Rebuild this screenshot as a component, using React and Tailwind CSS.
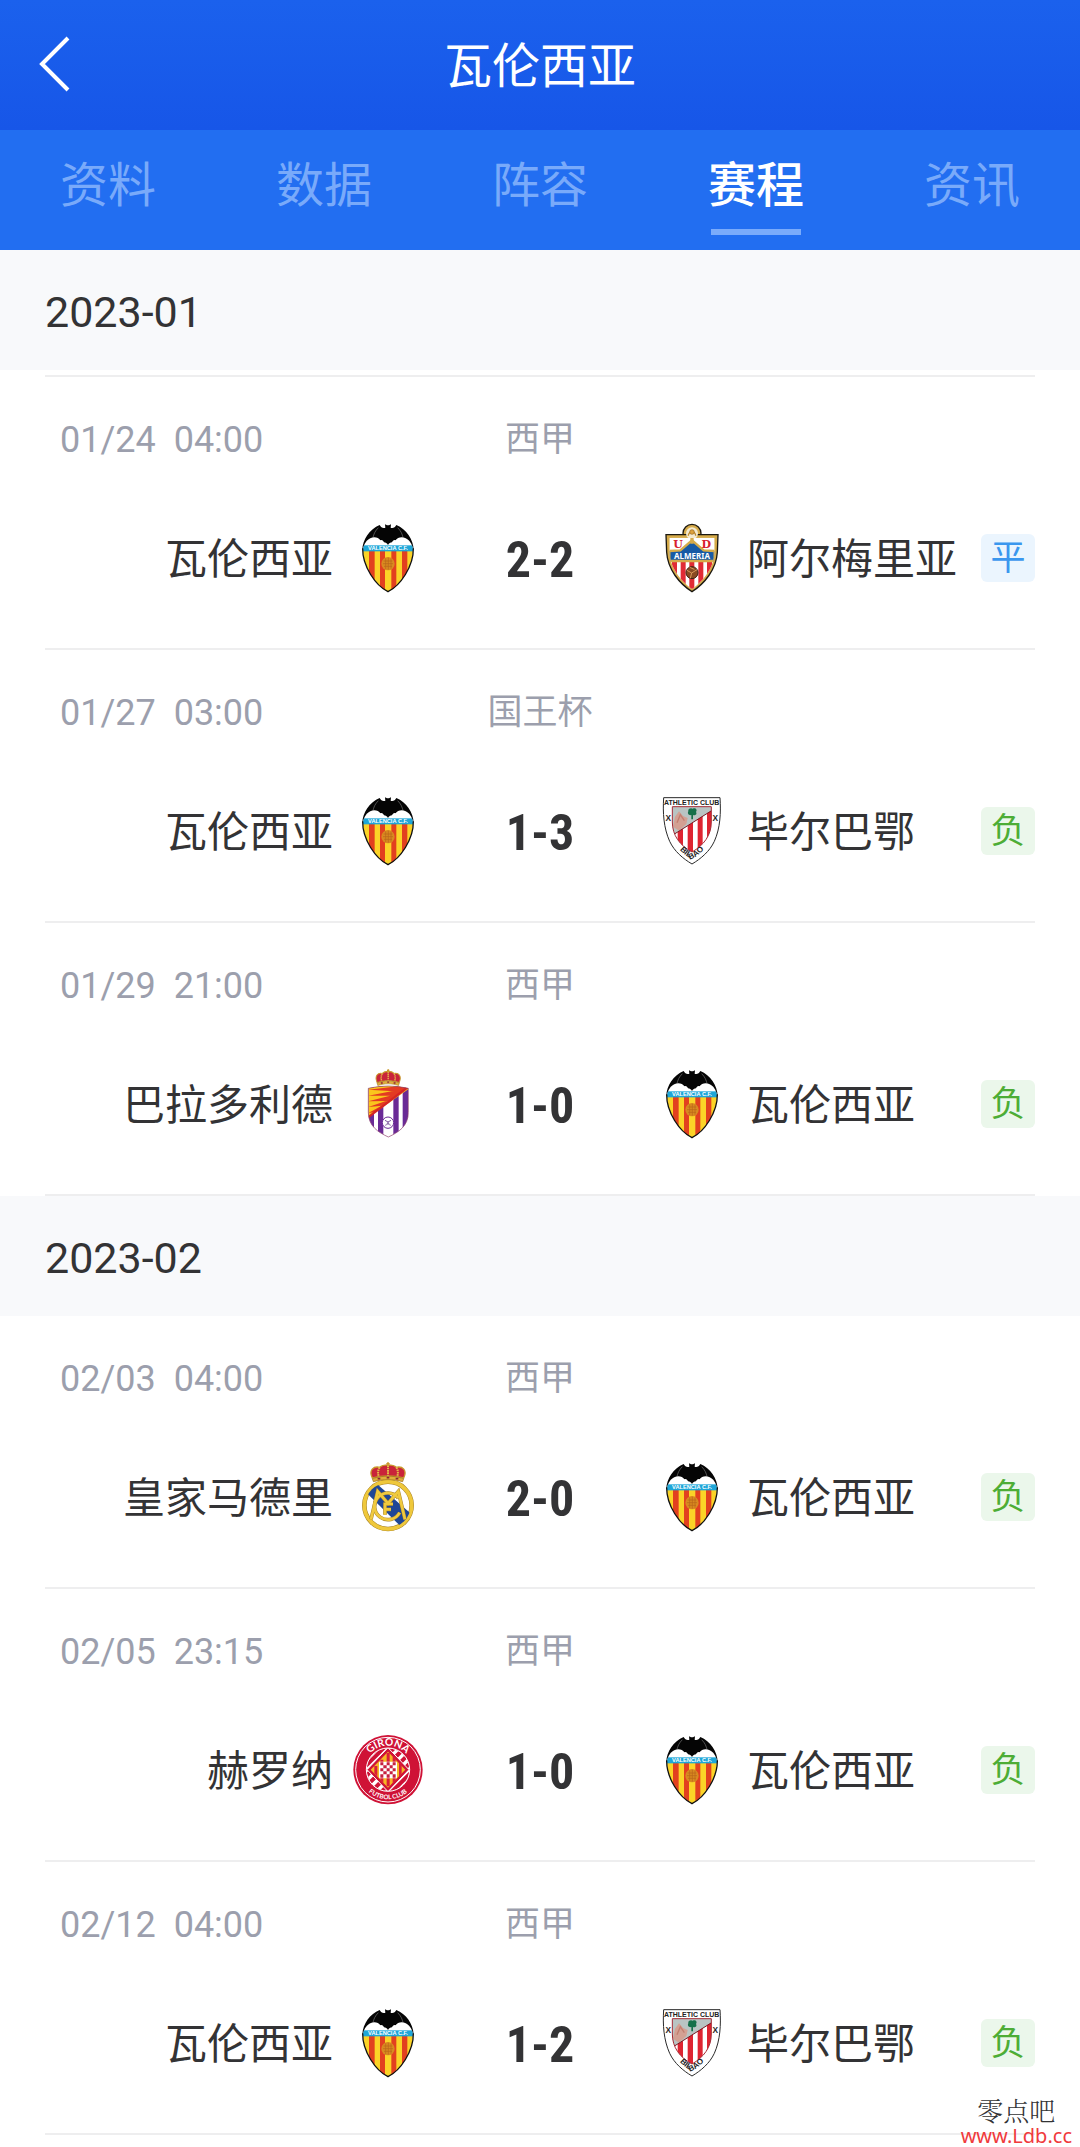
import React, { useId } from "react";

function Crest({ label, children }) {
  return (
    <svg viewBox="0 0 210 210" role="img" aria-label={label} className="size-[70px] shrink-0">
      {children}
    </svg>
  );
}

function Valencia() {
  const id = useId();
  return (
    <Crest label="Valencia C.F.">
      <defs>
        <clipPath id={id}>
          <path d="M30 80C30 130 68 188 105 206C142 188 180 130 180 80C180 55 150 25 105 25C60 25 30 55 30 80Z" />
        </clipPath>
      </defs>
      <g clipPath={`url(#${id})`}>
        <rect width="210" height="210" fill="#fff" />
        <rect y="84" width="210" height="126" fill="#fbd327" />
        <path d="M48 84h17v126h-17zM81 84h15v126h-15zM115 84h15v126h-15zM147 84h16v126h-16z" fill="#e2401f" />
        <rect y="67" width="210" height="18" fill="#1ea6d8" />
      </g>
      <circle cx="105" cy="122" r="20" fill="#d98a20" />
      <path d="M92 114h26M90 122h30M93 130h24M98 106v32M106 104v36M114 107v30" stroke="#b8651a" strokeWidth="2" />
      <path d="M29 76C28 130 68 188 105 206C142 188 182 130 181 76" fill="none" stroke="#111" strokeWidth="4" />
      <path
        d="M28 82C28 50 50 18 80 6C84 14 90 16 97 14L96 4L102 7H108L114 4L113 14C120 16 126 14 130 6C160 18 182 50 182 82C178 66 172 54 162 48C150 40 134 42 128 52C124 50 120 52 117 58C112 58 108 61 105 66C102 61 98 58 93 58C90 52 86 50 82 52C76 42 60 40 48 48C38 54 32 66 28 82Z"
        fill="#050505"
      />
      <path d="M76 14C66 24 62 34 60 44M134 14C144 24 148 34 150 44" fill="none" stroke="#777" strokeWidth="2" />
      <text x="105" y="82" textAnchor="middle" fontSize="17" fontWeight="700" fill="#fff" fontFamily="Liberation Sans, sans-serif">
        VALENCIA C.F.
      </text>
    </Crest>
  );
}

function Almeria() {
  const id = useId();
  return (
    <Crest label="UD Almeria">
      <defs>
        <clipPath id={id}>
          <path d="M37 44H173V84C173 130 140 174 105 198C70 174 37 130 37 84Z" />
        </clipPath>
      </defs>
      <circle cx="105" cy="31" r="27" fill="#d6ab4a" stroke="#1b1811" strokeWidth="4" />
      <path d="M27 35H183L181 88C178 140 142 182 105 206C68 182 32 140 29 88Z" fill="#d6ab4a" stroke="#1b1811" strokeWidth="4" />
      <circle cx="105" cy="31" r="18" fill="#f4ead0" />
      <path d="M94 38a11 11 0 0 1 22 0" fill="none" stroke="#c08a2a" strokeWidth="4" />
      <circle cx="105" cy="27" r="7" fill="#dda23d" stroke="#94651c" strokeWidth="2" />
      <g clipPath={`url(#${id})`}>
        <rect width="210" height="210" fill="#fff" />
        <path d="M45 114h15v90h-15zM71 114h15v90h-15zM97 114h15v90h-15zM124 114h15v90h-15zM150 114h15v90h-15z" fill="#e12b35" />
        <path d="M37 84L70 82L105 52L140 82L173 84V114H37Z" fill="#175aa5" stroke="#d6ab4a" strokeWidth="7" />
        <path d="M105 44V62" stroke="#d6ab4a" strokeWidth="10" />
      </g>
      <g fontFamily="DejaVu Serif, serif" fontWeight="700" fontSize="33" fill="#d8202d" textAnchor="middle">
        <text x="63" y="76">U</text>
        <text x="148" y="76">D</text>
      </g>
      <text x="105" y="107" textAnchor="middle" fontSize="24" fontWeight="700" fill="#fff" fontFamily="Noto Sans, sans-serif">
        ALMERIA
      </text>
      <circle cx="105" cy="149" r="18" fill="#8a4a22" stroke="#3d2212" strokeWidth="3" />
      <path d="M90 142L104 150L100 166M104 150L120 140M98 133L112 139" fill="none" stroke="#d99a5b" strokeWidth="3" />
    </Crest>
  );
}

function Bilbao() {
  const id = useId();
  return (
    <Crest label="Athletic Club Bilbao">
      <defs>
        <clipPath id={id}>
          <path d="M46 32H163V78C163 118 140 148 105 168C68 148 46 118 46 78Z" />
        </clipPath>
        <path id={`${id}a`} d="M44 122C60 156 82 180 105 188C128 178 150 154 164 120" />
      </defs>
      <path d="M20 5H189C192 50 190 96 172 136C158 166 132 188 105 204C78 188 52 166 38 136C20 96 17 50 20 5Z" fill="#fff" stroke="#2a2a2a" strokeWidth="3" />
      <g clipPath={`url(#${id})`}>
        <rect width="210" height="210" fill="#fff" />
        <rect x="40" y="28" width="130" height="90" fill="#b9c4c3" />
        <path d="M48 92L54 62L66 46L78 60L92 66L88 84L66 104Z" fill="#d3a093" />
        <path d="M60 80L70 56L82 74" fill="none" stroke="#c27e70" strokeWidth="4" />
        <path d="M46 118L170 40V210H46Z" fill="#fff" />
        <path d="M62 108L78 98V210H62ZM92 89L108 79V210H92ZM122 70L137 60V210H122ZM150 52L166 42V210H150Z" fill="#de2431" />
        <path d="M46 118L170 40" stroke="#7a1720" strokeWidth="3" />
      </g>
      <path d="M46 32H163V78C163 118 140 148 105 168C68 148 46 118 46 78Z" fill="none" stroke="#a32a35" strokeWidth="3" />
      <path d="M94 46C92 38 102 34 107 38C116 34 122 42 117 48C122 56 112 60 108 57V70H103V57C96 59 90 53 94 46Z" fill="#15704a" />
      <g fontFamily="Liberation Sans, sans-serif" fontWeight="700" fill="#222" textAnchor="middle">
        <text x="104" y="27" fontSize="21">ATHLETIC CLUB</text>
        <text x="34" y="74" fontSize="25">X</text>
        <text x="175" y="74" fontSize="25">X</text>
        <text fontSize="24">
          <textPath href={`#${id}a`} startOffset="50%">BILBAO</textPath>
        </text>
      </g>
    </Crest>
  );
}

function RoyalCrown() {
  return (
    <g>
      <path d="M58 48C46 24 62 12 80 16C90 6 120 6 130 16C148 12 164 24 152 48C120 40 90 40 58 48Z" fill="#c9243a" stroke="#c9992c" strokeWidth="4" />
      <path d="M80 16C74 26 74 36 78 44M130 16C136 26 136 36 132 44M105 10V42" fill="none" stroke="#e4bb48" strokeWidth="6" strokeDasharray="5 2" />
      <path d="M58 50C90 40 120 40 152 50L149 59C120 51 90 51 61 59Z" fill="#e0b03a" stroke="#9b6f1d" strokeWidth="2" />
      <path d="M105 0V12M100 5H110" stroke="#c9992c" strokeWidth="4" />
      <path d="M74 50h8M101 47h8M128 50h8" stroke="#8d2434" strokeWidth="5" />
    </g>
  );
}

function Valladolid() {
  const id = useId();
  const shield = "M46 58Q106 44 166 58V130C166 172 136 190 106 204C76 190 46 172 46 130Z";
  return (
    <Crest label="Real Valladolid">
      <defs>
        <clipPath id={id}>
          <path d={shield} />
        </clipPath>
      </defs>
      <g transform="translate(31 0) scale(.71 .84)">
        <RoyalCrown />
      </g>
      <g clipPath={`url(#${id})`}>
        <rect width="210" height="210" fill="#fff" />
        <path d="M46 50h17v160h-17zM75 50h16v160h-16zM121 50h16v160h-16zM149 50h18v160h-18z" fill="#6a2a96" />
        <path d="M40 44H170V58L44 146Z" fill="#fbc51d" />
        <path d="M46 62L166 48L150 68ZM46 80L150 60L130 80ZM46 97L132 75L108 96ZM46 114L110 92L88 110ZM46 132L90 108L64 130Z" fill="#e33a22" />
        <path d="M170 50L44 146" stroke="#d52424" strokeWidth="7" />
      </g>
      <path d={shield} fill="none" stroke="#8b3a68" strokeWidth="2" />
      <circle cx="105" cy="161" r="17" fill="#fff" stroke="#6a2a96" strokeWidth="3" />
      <path d="M96 154L105 159L114 154M98 170C102 160 108 160 112 170M105 158V168" fill="none" stroke="#7f5aa0" strokeWidth="3" />
    </Crest>
  );
}

function RealMadrid() {
  const id = useId();
  return (
    <Crest label="Real Madrid">
      <defs>
        <clipPath id={id}>
          <circle cx="105" cy="130" r="68" />
        </clipPath>
      </defs>
      <circle cx="105" cy="130" r="71" fill="#fff" stroke="#a8842a" strokeWidth="14" />
      <circle cx="105" cy="130" r="71" fill="none" stroke="#efc83b" strokeWidth="11" />
      <path d="M38 90L72 66L186 166L150 200Z" fill="#1f4796" clipPath={`url(#${id})`} />
      <g fill="none" stroke="#a8842a" strokeWidth="11">
        <path d="M54 172L74 88L105 124L136 88L156 172" />
        <path d="M136 108A40 40 0 1 0 140 152" />
        <path d="M96 158V126H120M96 142H114" />
      </g>
      <g fill="none" stroke="#f0ca3e" strokeWidth="8">
        <path d="M54 172L74 88L105 124L136 88L156 172" />
        <path d="M136 108A40 40 0 1 0 140 152" />
        <path d="M96 158V126H120M96 142H114" />
      </g>
      <RoyalCrown />
    </Crest>
  );
}

function Girona() {
  const id = useId();
  return (
    <Crest label="Girona Futbol Club">
      <defs>
        <clipPath id={id}>
          <circle cx="105" cy="104" r="64" />
        </clipPath>
        <path id={`${id}t`} d="M33 104A72 72 0 0 1 177 104" />
        <path id={`${id}b`} d="M16 104A89 89 0 0 0 194 104" />
      </defs>
      <circle cx="105" cy="104" r="104" fill="#cf1236" />
      <circle cx="105" cy="104" r="97" fill="none" stroke="#fff" strokeWidth="3" />
      <g clipPath={`url(#${id})`}>
        <rect width="210" height="210" fill="#fff" />
        <g transform="rotate(45 105 104)">
          <path d="M44 40h12v128h-12zM66 40h12v128h-12zM88 40h12v128h-12zM110 40h12v128h-12zM132 40h12v128h-12zM154 40h12v128h-12z" fill="#cf1236" />
        </g>
        <path d="M105 38L168 104L105 170L42 104Z" fill="#cf1236" stroke="#fff" strokeWidth="3" />
      </g>
      <path d="M105 50L157 104L105 158L53 104Z" fill="#f6b526" />
      <path d="M64 93h9v32l-9-10zM82 74h9v70l-9-9zM101 54h9v100h-9zM119 65h9v70l-9 9zM138 84h8v32l-8 9z" fill="#d91d37" />
      <rect x="78" y="80" width="54" height="50" rx="4" fill="#fff" />
      <path d="M82 82h9v9h-9zM101 82h9v9h-9zM119 82h9v9h-9zM91 91h10v9h-10zM110 91h9v9h-9zM82 100h9v9h-9zM101 100h9v9h-9zM119 100h9v9h-9zM91 109h10v9h-10zM110 109h9v9h-9zM82 118h9v10h-9zM101 118h9v10h-9zM119 118h9v10h-9z" fill="#c7203f" />
      <circle cx="105" cy="104" r="65" fill="none" stroke="#fff" strokeWidth="3" />
      <g fontFamily="Lato, sans-serif" fontWeight="700" fill="#fff" textAnchor="middle">
        <text fontSize="31">
          <textPath href={`#${id}t`} startOffset="50%">GIRONA</textPath>
        </text>
        <text fontSize="19">
          <textPath href={`#${id}b`} startOffset="50%">FUTBOL CLUB</textPath>
        </text>
      </g>
    </Crest>
  );
}

const teams = {
  valencia: { name: "瓦伦西亚", Logo: Valencia },
  almeria: { name: "阿尔梅里亚", Logo: Almeria },
  bilbao: { name: "毕尔巴鄂", Logo: Bilbao },
  valladolid: { name: "巴拉多利德", Logo: Valladolid },
  madrid: { name: "皇家马德里", Logo: RealMadrid },
  girona: { name: "赫罗纳", Logo: Girona },
};

const tabs = ["资料", "数据", "阵容", "赛程", "资讯"];

const months = [
  {
    month: "2023-01",
    matches: [
      { time: "01/24  04:00", league: "西甲", home: "valencia", away: "almeria", score: "2-2", result: "平" },
      { time: "01/27  03:00", league: "国王杯", home: "valencia", away: "bilbao", score: "1-3", result: "负" },
      { time: "01/29  21:00", league: "西甲", home: "valladolid", away: "valencia", score: "1-0", result: "负" },
    ],
  },
  {
    month: "2023-02",
    matches: [
      { time: "02/03  04:00", league: "西甲", home: "madrid", away: "valencia", score: "2-0", result: "负" },
      { time: "02/05  23:15", league: "西甲", home: "girona", away: "valencia", score: "1-0", result: "负" },
      { time: "02/12  04:00", league: "西甲", home: "valencia", away: "bilbao", score: "1-2", result: "负" },
    ],
  },
];

const resultStyles = {
  平: "bg-[#ebf5fe] text-[#3b97ee]",
  负: "bg-[#ebf7eb] text-[#4dad36]",
};

function TeamName({ children }) {
  return <span className="pt-1 leading-[66px] whitespace-nowrap">{children}</span>;
}

function Match({ match }) {
  const home = teams[match.home];
  const away = teams[match.away];
  return (
    <li className="border-b-2 border-[#eeeeef] pt-[38px] pb-[55px]">
      <div className="grid grid-cols-[1fr_234px_1fr] text-[36px] leading-[50px] text-[#9c9fad]">
        <time className="pl-[15px] whitespace-pre">{match.time}</time>
        <span className="text-center text-[35px]">{match.league}</span>
      </div>
      <div className="mt-[58px] grid grid-cols-[1fr_234px_1fr] items-center text-[42px]">
        <div className="flex items-center justify-end gap-5">
          <TeamName>{home.name}</TeamName>
          <home.Logo />
        </div>
        <strong className="pt-1 text-center font-['Roboto_Condensed',Roboto,sans-serif] text-[50px] leading-[66px] font-bold">
          {match.score}
        </strong>
        <div className="flex items-center gap-5">
          <away.Logo />
          <TeamName>{away.name}</TeamName>
          <span className={`ml-auto h-12 w-[54px] rounded-md text-center text-[35px] leading-[50px] ${resultStyles[match.result]}`}>
            {match.result}
          </span>
        </div>
      </div>
    </li>
  );
}

export default function App() {
  return (
    <div className="relative bg-white pb-3 font-[Roboto,'Noto_Sans_CJK_SC',sans-serif] text-[#333335]">
      <header className="grid h-[130px] grid-cols-[1fr_auto_1fr] items-center bg-linear-to-b from-[#1b61ed] to-[#1756e8] text-white">
        <button type="button" aria-label="返回" className="ml-9 w-10">
          <svg viewBox="0 0 40 60" className="h-[60px] w-10" fill="none" stroke="currentColor" strokeWidth="4">
            <path d="M32 3L6 29L32 55" />
          </svg>
        </button>
        <h1 className="pt-1 text-[48px] leading-[70px]">瓦伦西亚</h1>
      </header>
      <nav className="grid h-[120px] grid-cols-5 bg-[#226ef1]">
        {tabs.map((tab) => {
          const active = tab === "赛程";
          return (
            <a
              key={tab}
              href="#"
              aria-current={active ? "page" : undefined}
              className={`flex flex-col items-center pt-[21px] text-[48px] leading-[70px] ${active ? "font-medium text-white" : "text-[#79aafa]"}`}
            >
              {tab}
              {active && <span className="mt-2 h-1.5 w-[90px] bg-[#7aabfb]" />}
            </a>
          );
        })}
      </nav>
      <main>
        {months.map(({ month, matches }, i) => (
          <section key={month}>
            <h2 className="bg-[#f8f9fb] px-[45px] pt-1 text-[43px] leading-[116px]">{month}</h2>
            <div className={i === 0 ? "px-[45px] pt-[5px]" : "px-[45px]"}>
              <ul className={i === 0 ? "border-t-2 border-[#eeeeef]" : ""}>
                {matches.map((match) => (
                  <Match key={match.time} match={match} />
                ))}
              </ul>
            </div>
          </section>
        ))}
      </main>
      <div className="absolute right-2 bottom-0 flex flex-col items-center">
        <span className="font-['Noto_Serif_CJK_SC','Noto_Sans_CJK_SC',sans-serif] text-[26px] leading-[30px] font-light">零点吧</span>
        <a href="#" className="font-['Noto_Sans',sans-serif] text-[20px] leading-[22px] text-[#f03a3c]">
          www.Ldb.cc
        </a>
      </div>
    </div>
  );
}
